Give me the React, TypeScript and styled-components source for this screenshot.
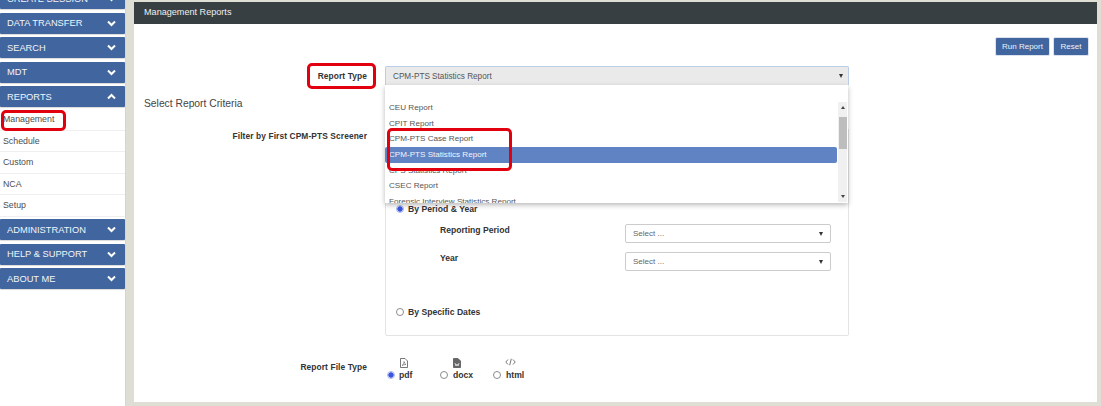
import styled, { createGlobalStyle } from 'styled-components';

const GlobalStyle = createGlobalStyle`
  html, body {
    margin: 0;
    padding: 0;
    height: 406px;
    overflow: hidden;
    background: #dfded4;
    font-family: "Liberation Sans", Arial, sans-serif;
  }
`;

const Page = styled.div`
  display: flex;
  width: 1101px;
  height: 406px;
  overflow: hidden;
`;

const Sidebar = styled.nav`
  width: 126px;
  height: 406px;
  flex: none;
  background: #fff;
  overflow: hidden;
  border-right: 1px solid #d4d4d4;
  box-sizing: border-box;
`;

const SideHead = styled.div<{ $clipped?: boolean }>`
  display: flex;
  align-items: center;
  justify-content: space-between;
  box-sizing: border-box;
  height: 21px;
  margin-top: ${(p) => (p.$clipped ? '-12px' : '0')};
  margin-bottom: 3.5px;
  padding: 0 9px 0 7px;
  background: #41659f;
  color: #f2f5fa;
  font-size: 9.3px;
  border-radius: 1px;
  box-shadow: 0 1px 1px rgba(0, 0, 0, 0.15);
`;

const SideLink = styled.div`
  display: flex;
  align-items: center;
  box-sizing: border-box;
  height: 21.5px;
  padding-left: 3px;
  color: #4d4d4d;
  font-size: 8.8px;
  border-bottom: 1px solid #efefef;
`;

const SubMenu = styled.div`
  margin-top: -1.5px;
  margin-bottom: 2.5px;
`;

const Main = styled.main`
  position: relative;
  width: 963px;
  height: 400px;
  margin: 2px 4px 0 8px;
  flex: none;
  background: #fff;
`;

const TitleBar = styled.header`
  display: flex;
  align-items: center;
  box-sizing: border-box;
  height: 22px;
  padding: 0 0 2px 10px;
  background: #373f42;
  color: #eef0f0;
  font-size: 9.1px;
`;

const Actions = styled.div`
  display: flex;
  justify-content: flex-end;
  gap: 3px;
  padding: 13px 8px 0 0;
`;

const ActionButton = styled.button<{ $w: number }>`
  width: ${(p) => p.$w}px;
  height: 19px;
  padding: 0;
  border: 1px solid #dbe2ee;
  border-radius: 2px;
  background: #41659f;
  color: #eef2f8;
  font-family: inherit;
  font-size: 8px;
`;

const FieldRow = styled.div`
  display: grid;
  grid-template-columns: 233px 464px;
  column-gap: 18px;
  align-items: center;
`;

const ReportTypeRow = styled(FieldRow)`
  margin-top: 10px;
`;

const FieldLabel = styled.div`
  text-align: right;
  color: #333;
  font-size: 8.4px;
  font-weight: 700;
  letter-spacing: 0.1px;
`;

const ReportTypeSelect = styled.div`
  display: flex;
  align-items: center;
  justify-content: space-between;
  box-sizing: border-box;
  height: 20px;
  padding: 0 5px 0 7px;
  background: #eaeaea;
  border: 1px solid #b9cde8;
  border-bottom-color: #ccc;
  border-radius: 2px;
  color: #555;
  font-size: 8.2px;
`;

const Caret = styled.span`
  width: 0;
  height: 0;
  border-left: 2.5px solid transparent;
  border-right: 2.5px solid transparent;
  border-top: 4px solid #333;
`;

const SectionTitle = styled.h3`
  margin: 11px 0 0 10px;
  height: 14px;
  line-height: 14px;
  color: #444;
  font-size: 10.3px;
  font-weight: 400;
`;

const CriteriaRow = styled(FieldRow)`
  align-items: start;
  margin-top: 17px;
`;

const FilterLabel = styled(FieldLabel)`
  padding-top: 3px;
`;

const CriteriaPanel = styled.div`
  box-sizing: border-box;
  height: 208px;
  padding-top: 74px;
  padding-left: 10px;
  border: 1px solid #e4e4e4;
  border-radius: 2px;
`;

const RadioLine = styled.label<{ $gap?: number; $spacing?: number }>`
  display: flex;
  align-items: center;
  gap: ${(p) => p.$spacing ?? 4}px;
  height: 12px;
  margin-top: ${(p) => p.$gap ?? 0}px;
  color: #333;
  font-size: 8.65px;
  font-weight: 700;
`;

const Radio = styled.span<{ $on?: boolean }>`
  display: inline-block;
  box-sizing: border-box;
  flex: none;
  width: 8px;
  height: 8px;
  border-radius: 50%;
  border: 1px solid ${(p) => (p.$on ? '#aab8ee' : '#8c8c8c')};
  background: ${(p) =>
    p.$on ? 'radial-gradient(circle, #3b55e0 0 2.4px, #e4e8fb 3px)' : '#fff'};
`;

const SubField = styled.div`
  display: grid;
  grid-template-columns: 185px 206px;
  align-items: start;
  margin-left: 44px;
  height: 28px;
`;

const SubFields = styled.div`
  margin-top: 9px;
`;

const SubLabel = styled.div`
  padding-top: 1px;
  color: #333;
  font-size: 8.6px;
  font-weight: 700;
`;

const SmallSelect = styled.div`
  display: flex;
  align-items: center;
  justify-content: space-between;
  box-sizing: border-box;
  height: 19px;
  padding: 0 7px;
  background: #fff;
  border: 1px solid #ccc;
  border-radius: 2px;
  color: #666;
  font-size: 8px;
`;

const FileTypeRow = styled(FieldRow)`
  align-items: start;
  margin-top: 22px;
`;

const FileTypeLabel = styled(FieldLabel)`
  padding-top: 4px;
`;

const FileTypes = styled.div`
  display: flex;
`;

const FileType = styled.div`
  display: flex;
  flex-direction: column;
  width: 53px;
  padding-left: 2px;
  box-sizing: border-box;
`;

const FileIcon = styled.div`
  display: flex;
  justify-content: center;
  width: 34px;
  height: 11px;
  color: #555;
  font-size: 8px;
`;

const Dropdown = styled.div`
  position: absolute;
  left: 251px;
  top: 83px;
  width: 463px;
  height: 118px;
  background: #fff;
  overflow: hidden;
  box-shadow: 0 2px 5px rgba(0, 0, 0, 0.28);
  display: flex;
`;

const OptionList = styled.ul`
  flex: 1;
  margin: 0;
  padding: 15px 0 0 0;
  list-style: none;
`;

const Option = styled.li<{ $active?: boolean }>`
  box-sizing: border-box;
  height: 15.7px;
  line-height: 15.7px;
  padding-left: 4px;
  border-radius: 2px;
  background: ${(p) => (p.$active ? '#6083c4' : 'transparent')};
  color: ${(p) => (p.$active ? '#f2f5fb' : '#555')};
  font-size: 8.1px;
`;

const ScrollTrack = styled.div`
  position: relative;
  flex: none;
  width: 9px;
  margin: 17px 1px 1px 1px;
  background: #f0f0f0;
`;

const ScrollThumb = styled.div`
  position: absolute;
  left: 1px;
  right: 0;
  top: 15px;
  height: 32px;
  background: #bdbdbd;
`;

const ScrollArrow = styled.span<{ $down?: boolean }>`
  position: absolute;
  left: 2.5px;
  ${(p) => (p.$down ? 'bottom: 4px;' : 'top: 4px;')}
  width: 0;
  height: 0;
  border-left: 2px solid transparent;
  border-right: 2px solid transparent;
  ${(p) => (p.$down ? 'border-top: 3px solid #444;' : 'border-bottom: 3px solid #444;')}
`;

const Callout = styled.div<{ $x: number; $y: number; $w: number; $h: number }>`
  position: absolute;
  left: ${(p) => p.$x}px;
  top: ${(p) => p.$y}px;
  width: ${(p) => p.$w}px;
  height: ${(p) => p.$h}px;
  box-sizing: border-box;
  border: 3px solid #e2000f;
  border-radius: 5px;
  z-index: 5;
`;

function Chevron({ up = false }: { up?: boolean }) {
  return (
    <svg width="9" height="7" viewBox="0 0 9 7" aria-hidden="true">
      <path
        d={up ? 'M1 5.5 4.5 2 8 5.5' : 'M1 1.5 4.5 5 8 1.5'}
        fill="none"
        stroke="#fff"
        strokeWidth="2"
      />
    </svg>
  );
}

function PdfIcon() {
  return (
    <svg width="8" height="10" viewBox="0 0 8 10" aria-hidden="true">
      <path d="M.5.5h4.500L7.500 3v6.500h-7z" fill="none" stroke="#555" strokeWidth=".8" />
      <path d="M2 7.500c1.500-1 2-2.500 2-4 .3 1.500 1 2.500 2 3-1.500 0-2.800.3-4 1z" fill="none" stroke="#555" strokeWidth=".6" />
    </svg>
  );
}

function DocxIcon() {
  return (
    <svg width="8" height="10" viewBox="0 0 8 10" aria-hidden="true">
      <path d="M.5.5h4.500L7.500 3v6.500h-7z" fill="#666" stroke="#555" strokeWidth=".8" />
      <path d="M2 5l1 3 1-2 1 2 1-3" fill="none" stroke="#fff" strokeWidth=".7" />
    </svg>
  );
}

function CodeIcon() {
  return (
    <svg width="11" height="8" viewBox="0 0 11 8" aria-hidden="true">
      <path d="M3 1.500.8 4 3 6.500M8 1.500 10.200 4 8 6.500M6.300.8 4.700 7.200" fill="none" stroke="#555" strokeWidth=".8" />
    </svg>
  );
}

const reportOptions = [
  'CEU Report',
  'CPIT Report',
  'CPM-PTS Case Report',
  'CPM-PTS Statistics Report',
  'CPS Statistics Report',
  'CSEC Report',
  'Forensic Interview Statistics Report',
];

const subLinks = ['Management', 'Schedule', 'Custom', 'NCA', 'Setup'];

export default function App() {
  return (
    <>
      <GlobalStyle />
      <Page>
        <Sidebar>
          <SideHead $clipped>
            CREATE SESSION <Chevron />
          </SideHead>
          <SideHead>
            DATA TRANSFER <Chevron />
          </SideHead>
          <SideHead>
            SEARCH <Chevron />
          </SideHead>
          <SideHead>
            MDT <Chevron />
          </SideHead>
          <SideHead>
            REPORTS <Chevron up />
          </SideHead>
          <SubMenu>
            {subLinks.map((name) => (
              <SideLink key={name}>{name}</SideLink>
            ))}
          </SubMenu>
          <SideHead>
            ADMINISTRATION <Chevron />
          </SideHead>
          <SideHead>
            HELP &amp; SUPPORT <Chevron />
          </SideHead>
          <SideHead>
            ABOUT ME <Chevron />
          </SideHead>
        </Sidebar>
        <Main>
          <TitleBar>Management Reports</TitleBar>
          <Actions>
            <ActionButton $w={55}>Run Report</ActionButton>
            <ActionButton $w={36}>Reset</ActionButton>
          </Actions>
          <ReportTypeRow>
            <FieldLabel>Report Type</FieldLabel>
            <ReportTypeSelect>
              CPM-PTS Statistics Report
              <Caret />
            </ReportTypeSelect>
          </ReportTypeRow>
          <SectionTitle>Select Report Criteria</SectionTitle>
          <CriteriaRow>
            <FilterLabel>Filter by First CPM-PTS Screener</FilterLabel>
            <CriteriaPanel>
              <RadioLine>
                <Radio $on />
                By Period &amp; Year
              </RadioLine>
              <SubFields>
                <SubField>
                  <SubLabel>Reporting Period</SubLabel>
                  <SmallSelect>
                    Select ...
                    <Caret />
                  </SmallSelect>
                </SubField>
                <SubField>
                  <SubLabel>Year</SubLabel>
                  <SmallSelect>
                    Select ...
                    <Caret />
                  </SmallSelect>
                </SubField>
              </SubFields>
              <RadioLine $gap={26}>
                <Radio />
                By Specific Dates
              </RadioLine>
            </CriteriaPanel>
          </CriteriaRow>
          <FileTypeRow>
            <FileTypeLabel>Report File Type</FileTypeLabel>
            <FileTypes>
              <FileType>
                <FileIcon>
                  <PdfIcon />
                </FileIcon>
                <RadioLine>
                  <Radio $on />
                  pdf
                </RadioLine>
              </FileType>
              <FileType>
                <FileIcon>
                  <DocxIcon />
                </FileIcon>
                <RadioLine $spacing={5}>
                  <Radio />
                  docx
                </RadioLine>
              </FileType>
              <FileType>
                <FileIcon>
                  <CodeIcon />
                </FileIcon>
                <RadioLine $spacing={5}>
                  <Radio />
                  html
                </RadioLine>
              </FileType>
            </FileTypes>
          </FileTypeRow>
          <Dropdown>
            <OptionList>
              {reportOptions.map((name) => (
                <Option key={name} $active={name === 'CPM-PTS Statistics Report'}>
                  {name}
                </Option>
              ))}
            </OptionList>
            <ScrollTrack>
              <ScrollArrow />
              <ScrollThumb />
              <ScrollArrow $down />
            </ScrollTrack>
          </Dropdown>
          <Callout $x={173} $y={61} $w={69} $h={26} />
          <Callout $x={253} $y={126} $w={125} $h={43} />
        </Main>
        <Callout $x={1} $y={110} $w={65} $h={21} />
      </Page>
    </>
  );
}
